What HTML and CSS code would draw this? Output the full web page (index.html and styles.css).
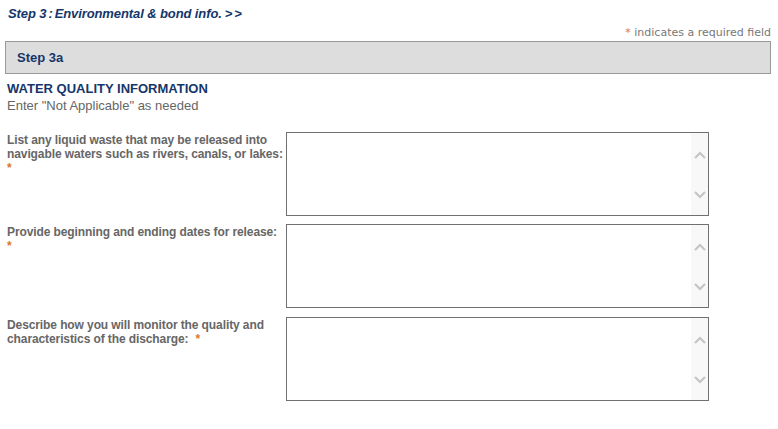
FILE: index.html
```html
<!DOCTYPE html>
<html>
<head>
<meta charset="utf-8">
<link rel="stylesheet" href="styles.css">
</head>
<body>
<div class="page">
  <h1 class="step-title">Step 3<span class="sep">:</span>Environmental &amp; bond info.<span class="arrows">&gt;&gt;</span></h1>
  <div class="req-note"><span class="star">*</span> indicates a required field</div>
  <div class="step-box">Step 3a</div>
  <div class="section">
    <h2 class="section-title">WATER QUALITY INFORMATION</h2>
    <p class="section-sub">Enter "Not Applicable" as needed</p>
  </div>
  <div class="rows">
    <div class="row">
      <label class="label">List any liquid waste that may be released into navigable waters such as rivers, canals, or lakes:<br><span class="star">*</span></label>
      <div class="box">
        <textarea class="input"></textarea>
        <div class="scroll">
          <svg width="12" height="8" viewBox="0 0 12 8"><path d="M1 7 L6 2 L11 7" fill="none" stroke="#c4c4c4" stroke-width="2"/></svg>
          <svg width="12" height="8" viewBox="0 0 12 8"><path d="M1 1 L6 6 L11 1" fill="none" stroke="#c4c4c4" stroke-width="2"/></svg>
        </div>
      </div>
    </div>
    <div class="row">
      <label class="label">Provide beginning and ending dates for release:<br><span class="star">*</span></label>
      <div class="box">
        <textarea class="input"></textarea>
        <div class="scroll">
          <svg width="12" height="8" viewBox="0 0 12 8"><path d="M1 7 L6 2 L11 7" fill="none" stroke="#c4c4c4" stroke-width="2"/></svg>
          <svg width="12" height="8" viewBox="0 0 12 8"><path d="M1 1 L6 6 L11 1" fill="none" stroke="#c4c4c4" stroke-width="2"/></svg>
        </div>
      </div>
    </div>
    <div class="row row-last">
      <label class="label">Describe how you will monitor the quality and characteristics of the discharge:<span class="star star-gap">*</span></label>
      <div class="box">
        <textarea class="input"></textarea>
        <div class="scroll">
          <svg width="12" height="8" viewBox="0 0 12 8"><path d="M1 7 L6 2 L11 7" fill="none" stroke="#c4c4c4" stroke-width="2"/></svg>
          <svg width="12" height="8" viewBox="0 0 12 8"><path d="M1 1 L6 6 L11 1" fill="none" stroke="#c4c4c4" stroke-width="2"/></svg>
        </div>
      </div>
    </div>
  </div>
</div>
</body>
</html>
```
FILE: styles.css
```css
html, body {
  margin: 0;
  padding: 0;
  background: #ffffff;
}
.page {
  font-family: "Liberation Sans", Arial, sans-serif;
  font-size: 12px;
  color: #666666;
  padding: 7px 7px 0 5px;
}
.step-title {
  margin: 0 0 0 3px;
  font-size: 13px;
  line-height: 14px;
  font-weight: bold;
  font-style: italic;
  color: #15366a;
  letter-spacing: -0.1px;
}
.sep {
  margin: 0 2px 0 2px;
}
.arrows {
  margin-left: 3px;
  letter-spacing: 2px;
}
.req-note {
  margin-top: 5px;
  text-align: right;
  font-family: "DejaVu Sans", Verdana, sans-serif;
  font-size: 11px;
  line-height: 14px;
  color: #777777;
}
.star {
  color: #e0762a;
}
.star-gap {
  margin-left: 7px;
}
.step-box {
  margin-top: 1px;
  height: 31px;
  line-height: 31px;
  padding-left: 11px;
  background: #dddddd;
  border: 1px solid #999999;
  font-size: 13px;
  font-weight: bold;
  color: #15366a;
}
.section {
  margin: 7px 0 0 2px;
}
.section-title {
  margin: 0;
  font-size: 13px;
  line-height: 15px;
  font-weight: bold;
  color: #15366a;
}
.section-sub {
  margin: 2px 0 0 0;
  font-size: 13px;
  line-height: 15px;
  color: #666666;
}
.rows {
  margin-top: 19px;
  display: flex;
  flex-direction: column;
  gap: 8px;
}
.row {
  display: flex;
  padding-left: 2px;
}
.row-last {
  margin-top: 1px;
}
.label {
  width: 283px;
  margin-right: -4px;
  font-weight: bold;
  line-height: 14px;
  letter-spacing: -0.1px;
  color: #666666;
  padding-top: 1px;
}
.box {
  width: 421px;
  height: 82px;
  border: 1px solid #707070;
  display: flex;
}
.input {
  flex: 1;
  border: 0;
  margin: 0;
  padding: 2px;
  resize: none;
  outline: none;
  background: #ffffff;
  overflow: hidden;
}
.scroll {
  width: 17px;
  background: #f8f8f8;
  display: flex;
  flex-direction: column;
  justify-content: space-between;
  align-items: center;
  padding: 18px 0 16px 0;
}
```
